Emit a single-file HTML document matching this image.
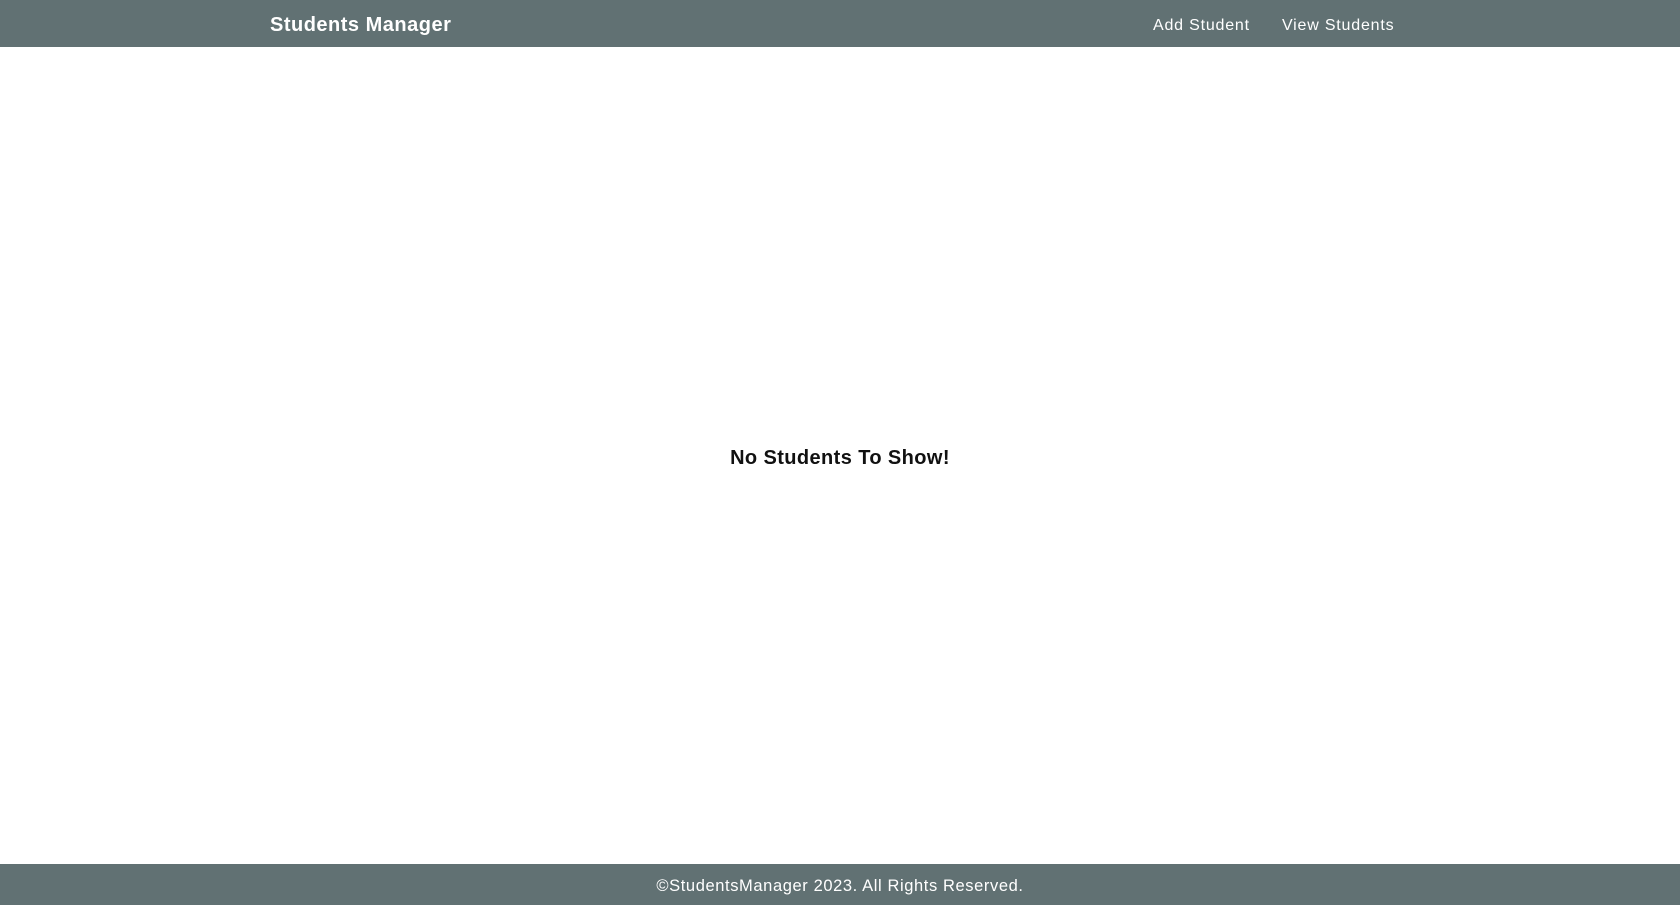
<!DOCTYPE html>
<html><head><meta charset="utf-8"><style>
html,body{margin:0;padding:0;width:1680px;height:923px;background:#fff;font-family:"Liberation Sans",sans-serif;overflow:hidden;position:relative}
.nav{position:absolute;left:0;top:0;width:1680px;height:47px;background:#617173;color:#fff}
.brand{position:absolute;left:270px;top:14px;font-size:20px;font-weight:bold;letter-spacing:0.5px}
.link{position:absolute;top:17px;font-size:16px;letter-spacing:0.8px}
.msg{position:absolute;left:0;width:1680px;top:447px;text-align:center;font-size:20px;font-weight:bold;color:#111;letter-spacing:0.4px}
.foot{position:absolute;left:0;top:864px;width:1680px;height:41px;background:#617173;color:#fff;text-align:center;font-size:16.5px;line-height:44px;letter-spacing:0.6px}
</style></head><body>
<div class="nav"><div class="brand">Students Manager</div>
<div class="link" style="left:1153px">Add Student</div>
<div class="link" style="left:1282px">View Students</div></div>
<div class="msg">No Students To Show!</div>
<div class="foot">©StudentsManager 2023. All Rights Reserved.</div>
</body></html>
